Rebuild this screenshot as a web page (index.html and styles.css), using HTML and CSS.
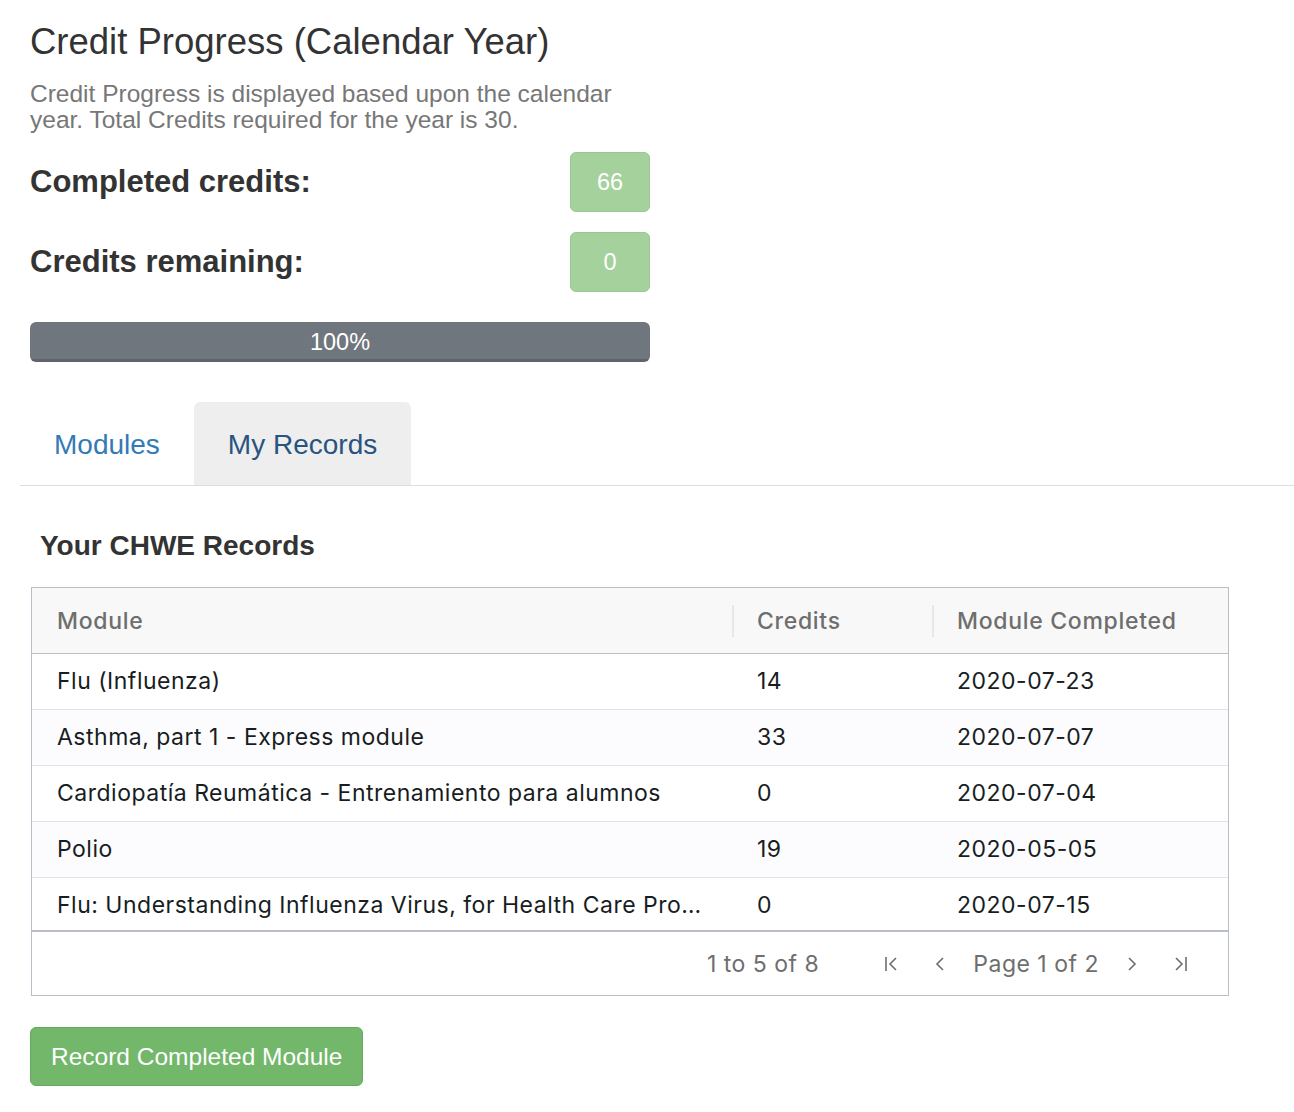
FILE: index.html
```html
<!DOCTYPE html>
<html lang="en">
<head>
    <meta charset="UTF-8">
    <meta name="viewport" content="width=device-width, initial-scale=1.0">
    <title>Credit Progress</title>
    <link rel="stylesheet" href="styles.css">
</head>
<body>
    <div class="page">
        <!-- Credit Progress Section -->
        <div class="progress-section">
            <h1>Credit Progress (Calendar Year)</h1>
            <p class="intro">Credit Progress is displayed based upon the calendar year. Total Credits required for the year is 30.</p>

            <div class="credit-row">
                <span class="credit-label">Completed credits:</span>
                <span class="credit-badge">66</span>
            </div>
            <div class="credit-row">
                <span class="credit-label">Credits remaining:</span>
                <span class="credit-badge">0</span>
            </div>

            <div class="progress">
                <div class="progress-bar" style="width: 100%;">100%</div>
            </div>
        </div>

        <!-- Tabs -->
        <ul class="nav-tabs">
            <li class="tab"><a href="#">Modules</a></li>
            <li class="tab active"><a href="#">My Records</a></li>
        </ul>

        <!-- Records Section -->
        <div class="tab-content">
            <h2>Your CHWE Records</h2>

            <div class="grid">
                <div class="grid-header">
                    <div class="cell col-module">Module</div>
                    <div class="cell col-credits">Credits</div>
                    <div class="cell col-date">Module Completed</div>
                </div>
                <div class="grid-row">
                    <div class="cell col-module">Flu (Influenza)</div>
                    <div class="cell col-credits">14</div>
                    <div class="cell col-date">2020-07-23</div>
                </div>
                <div class="grid-row odd">
                    <div class="cell col-module">Asthma, part 1 - Express module</div>
                    <div class="cell col-credits">33</div>
                    <div class="cell col-date">2020-07-07</div>
                </div>
                <div class="grid-row">
                    <div class="cell col-module">Cardiopatía Reumática - Entrenamiento para alumnos</div>
                    <div class="cell col-credits">0</div>
                    <div class="cell col-date">2020-07-04</div>
                </div>
                <div class="grid-row odd">
                    <div class="cell col-module">Polio</div>
                    <div class="cell col-credits">19</div>
                    <div class="cell col-date">2020-05-05</div>
                </div>
                <div class="grid-row last">
                    <div class="cell col-module">Flu: Understanding Influenza Virus, for Health Care Professionals</div>
                    <div class="cell col-credits">0</div>
                    <div class="cell col-date">2020-07-15</div>
                </div>

                <div class="paging">
                    <span class="paging-summary">1 to 5 of 8</span>
                    <span class="paging-icon">
                        <svg width="22" height="22" viewBox="0 0 22 22"><path d="M5 4v14M15 5l-6 6 6 6" fill="none" stroke="currentColor" stroke-width="1.6"/></svg>
                    </span>
                    <span class="paging-icon">
                        <svg width="22" height="22" viewBox="0 0 22 22"><path d="M14 5l-6 6 6 6" fill="none" stroke="currentColor" stroke-width="1.6"/></svg>
                    </span>
                    <span class="paging-text">Page 1 of 2</span>
                    <span class="paging-icon">
                        <svg width="22" height="22" viewBox="0 0 22 22"><path d="M8 5l6 6-6 6" fill="none" stroke="currentColor" stroke-width="1.6"/></svg>
                    </span>
                    <span class="paging-icon">
                        <svg width="22" height="22" viewBox="0 0 22 22"><path d="M7 5l6 6-6 6M17 4v14" fill="none" stroke="currentColor" stroke-width="1.6"/></svg>
                    </span>
                </div>
            </div>

            <button class="record-button">Record Completed Module</button>
        </div>
    </div>
</body>
</html>
```

FILE: styles.css
```css
body {
    font-family: 'Liberation Sans', Arial, sans-serif;
    margin: 0;
    background: #fff;
    color: #333;
}

.page {
    padding-left: 20px;
}

.progress-section {
    width: 620px;
    margin-left: 10px;
}

.progress-section h1 {
    margin: 22px 0 0;
    font-size: 36.5px;
    line-height: 40px;
    font-weight: normal;
    color: #333;
}

.intro {
    margin: 19px 0 19px;
    font-size: 24.5px;
    line-height: 26px;
    color: #777;
}

.credit-row {
    display: flex;
    justify-content: space-between;
    align-items: center;
    margin-bottom: 20px;
}

.credit-label {
    font-size: 31px;
    font-weight: bold;
    color: #333;
}

.credit-badge {
    width: 78px;
    height: 58px;
    line-height: 58px;
    text-align: center;
    background: #a5d19c;
    border: 1px solid #98c88e;
    border-radius: 6px;
    color: #fff;
    font-size: 23.5px;
}

.progress {
    margin-top: 30px;
    height: 40px;
    background: #f5f5f5;
    border-radius: 6px;
    overflow: hidden;
}

.progress-bar {
    height: 40px;
    line-height: 40px;
    background: #6f767e;
    box-shadow: inset 0 -3px 0 rgba(0, 0, 0, 0.15);
    color: #fff;
    text-align: center;
    font-size: 23.5px;
}

.nav-tabs {
    display: flex;
    list-style: none;
    margin: 40px 0 0;
    padding: 0;
    border-bottom: 1px solid #ddd;
}

.tab a {
    display: block;
    height: 83px;
    line-height: 86px;
    padding: 0 34px;
    border-radius: 6px 6px 0 0;
    font-size: 28px;
    color: #337ab7;
    text-decoration: none;
}

.tab.active a {
    background: #eee;
    color: #2a5480;
}

.tab-content {
    padding-left: 11px;
}

.tab-content h2 {
    margin: 44px 0 0 9px;
    font-size: 28px;
    line-height: 32px;
    font-weight: bold;
    color: #333;
}

.grid {
    margin-top: 25px;
    width: 1196px;
    border: 1px solid #babfc7;
    font-family: Inter, 'Noto Sans', sans-serif;
    font-size: 23px;
    letter-spacing: 0.5px;
    color: #181d1f;
}

.grid-header {
    display: flex;
    height: 65px;
    background: #f8f8f8;
    border-bottom: 1px solid #babfc7;
    color: #6e6e6e;
    font-weight: 500;
    letter-spacing: 0.7px;
}

.grid-row {
    display: flex;
    height: 55px;
    background: #fff;
    border-bottom: 1px solid #dde2eb;
}

.grid-row.odd {
    background: #fcfcfe;
}

.grid-row.last {
    height: 52px;
    border-bottom: none;
}

.cell {
    display: flex;
    align-items: center;
    padding: 0 25px;
    box-sizing: border-box;
    white-space: nowrap;
    overflow: hidden;
}

.grid-row .cell {
    display: block;
    line-height: 55px;
    text-overflow: ellipsis;
}

.col-module {
    width: 700px;
}

.col-credits {
    width: 200px;
}

.col-date {
    flex: 1;
}

.grid-header .cell + .cell {
    position: relative;
}

.grid-header .cell + .cell::before {
    content: "";
    position: absolute;
    left: 0;
    top: 17px;
    height: 32px;
    border-left: 2px solid #e4e7ec;
}

.paging {
    display: flex;
    align-items: center;
    justify-content: flex-end;
    height: 63px;
    border-top: 2px solid #babfc7;
    padding-right: 24px;
    color: #6e6e6e;
}

.paging-summary {
    margin-right: 49px;
}

.paging-icon {
    display: flex;
    margin: 0 13px;
}

.paging-text {
    margin: 0 9px;
}

.record-button {
    margin: 31px 0 30px -1px;
    height: 59px;
    padding: 0 20px;
    background: #72b76a;
    border: 1px solid #65a95d;
    border-radius: 6px;
    color: #fff;
    font-family: 'Liberation Sans', Arial, sans-serif;
    font-size: 24.5px;
    cursor: pointer;
}
```
